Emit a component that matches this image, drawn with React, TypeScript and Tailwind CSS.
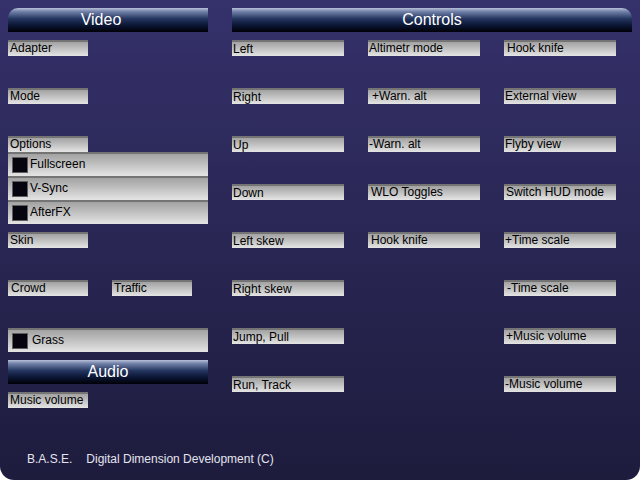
import React from 'react';

const font = "font-['Liberation_Sans',Arial,sans-serif]";
const btnBg = 'bg-[linear-gradient(to_bottom,#747474_0px,#747474_2px,#a2a2a2_2px,#e4e4e4_100%)]';
const headBg = 'bg-[linear-gradient(to_bottom,#b8c0d8_0%,#7080a8_15%,#23345e_45%,#0b1634_72%,#000006_100%)]';

interface BtnProps {
    label: string;
    w?: string;
    pl?: string;
    pt?: string;
}

function Btn({ label, w = 'w-[80px]', pl = 'pl-[2px]', pt = 'pt-0' }: BtnProps) {
    return (
        <div className={`h-[16px] shrink-0 ${w} ${btnBg} ${pl} ${pt} text-[12px] leading-[16px] text-black whitespace-nowrap overflow-hidden`}>
            {label}
        </div>
    );
}

function CheckRow({ label, pl = 'pl-[2px]' }: { label: string; pl?: string }) {
    return (
        <div className={`h-[24px] w-[200px] flex items-center ${btnBg} pl-[4px]`}>
            <div className="w-[16px] h-[16px] bg-[#06050f] border border-[#5e5e5e] mt-[1px]" />
            <span className={`${pl} text-[12px] leading-[16px] text-black`}>{label}</span>
        </div>
    );
}

function Header({ title, rounded, extra = '' }: { title: string; rounded: string; extra?: string }) {
    return (
        <div className={`h-[24px] flex items-center justify-center ${headBg} ${rounded} ${extra} text-white text-[16px] leading-[24px]`}>
            {title}
        </div>
    );
}

const col1 = [
    { label: 'Left', pl: 'pl-[1px]' },
    { label: 'Right', pl: 'pl-[1px]' },
    { label: 'Up', pl: 'pl-[1px]' },
    { label: 'Down', pl: 'pl-[1px]' },
    { label: 'Left skew', pl: 'pl-[1px]' },
    { label: 'Right skew', pl: 'pl-[1px]' },
    { label: 'Jump, Pull', pl: 'pl-[1px]' },
    { label: 'Run, Track', pl: 'pl-[1px]' },
];

const col2 = [
    { label: 'Altimetr mode', pl: 'pl-[1px]' },
    { label: '+Warn. alt', pl: 'pl-[4px]' },
    { label: '-Warn. alt', pl: 'pl-[1px]' },
    { label: 'WLO Toggles', pl: 'pl-[3px]' },
    { label: 'Hook knife', pl: 'pl-[3px]' },
];

const col3 = [
    { label: 'Hook knife', pl: 'pl-[3px]' },
    { label: 'External view', pl: 'pl-[1px]' },
    { label: 'Flyby view', pl: 'pl-[1px]' },
    { label: 'Switch HUD mode', pl: 'pl-[2px]' },
    { label: '+Time scale', pl: 'pl-[1px]' },
    { label: '-Time scale', pl: 'pl-[3px]' },
    { label: '+Music volume', pl: 'pl-[2px]' },
    { label: '-Music volume', pl: 'pl-[1px]' },
];

export default function App() {
    return (
        <div className={`w-[640px] h-[480px] bg-white ${font}`}>
            <div className="w-full h-full flex flex-col rounded-b-[14px] bg-linear-to-b from-[#35316b] to-[#1d1c3d] pt-[8px] px-[8px] pb-[13px]">
                <div className="flex">
                    {/* Video + Audio */}
                    <div className="w-[200px] flex flex-col">
                        <Header title="Video" rounded="rounded-tl-[10px]" extra="pr-[14px]" />
                        <div className="mt-[8px]"><Btn label="Adapter" /></div>
                        <div className="mt-[32px]"><Btn label="Mode" /></div>
                        <div className="mt-[32px]"><Btn label="Options" /></div>
                        <CheckRow label="Fullscreen" />
                        <CheckRow label="V-Sync" />
                        <CheckRow label="AfterFX" />
                        <div className="mt-[8px]"><Btn label="Skin" /></div>
                        <div className="mt-[32px] flex gap-[24px]">
                            <Btn label="Crowd" pl="pl-[3px]" />
                            <Btn label="Traffic" pl="pl-[2px]" />
                        </div>
                        <div className="mt-[32px]"><CheckRow label="Grass" pl="pl-[4px]" /></div>
                        <div className="mt-[8px]"><Header title="Audio" rounded="rounded-none" /></div>
                        <div className="mt-[8px]"><Btn label="Music volume" /></div>
                    </div>

                    {/* Controls */}
                    <div className="ml-[24px] w-[400px] flex flex-col">
                        <Header title="Controls" rounded="rounded-tr-[10px]" />
                        <div className="mt-[8px] flex gap-[24px]">
                            {[col1, col2, col3].map((col, i) => (
                                <div key={i} className="w-[112px] flex flex-col gap-[32px]">
                                    {col.map((b, j) => (
                                        <Btn key={j} label={b.label} w="w-[112px]" pl={b.pl} pt={i === 0 ? 'pt-[1px]' : 'pt-0'} />
                                    ))}
                                </div>
                            ))}
                        </div>
                    </div>
                </div>

                <div className="mt-auto pl-[19px] text-[12px] leading-[16px] text-[#e4e4ee] whitespace-nowrap">
                    <span>B.A.S.E.</span>
                    <span className="ml-[14px]">Digital Dimension Development (C)</span>
                </div>
            </div>
        </div>
    );
}
